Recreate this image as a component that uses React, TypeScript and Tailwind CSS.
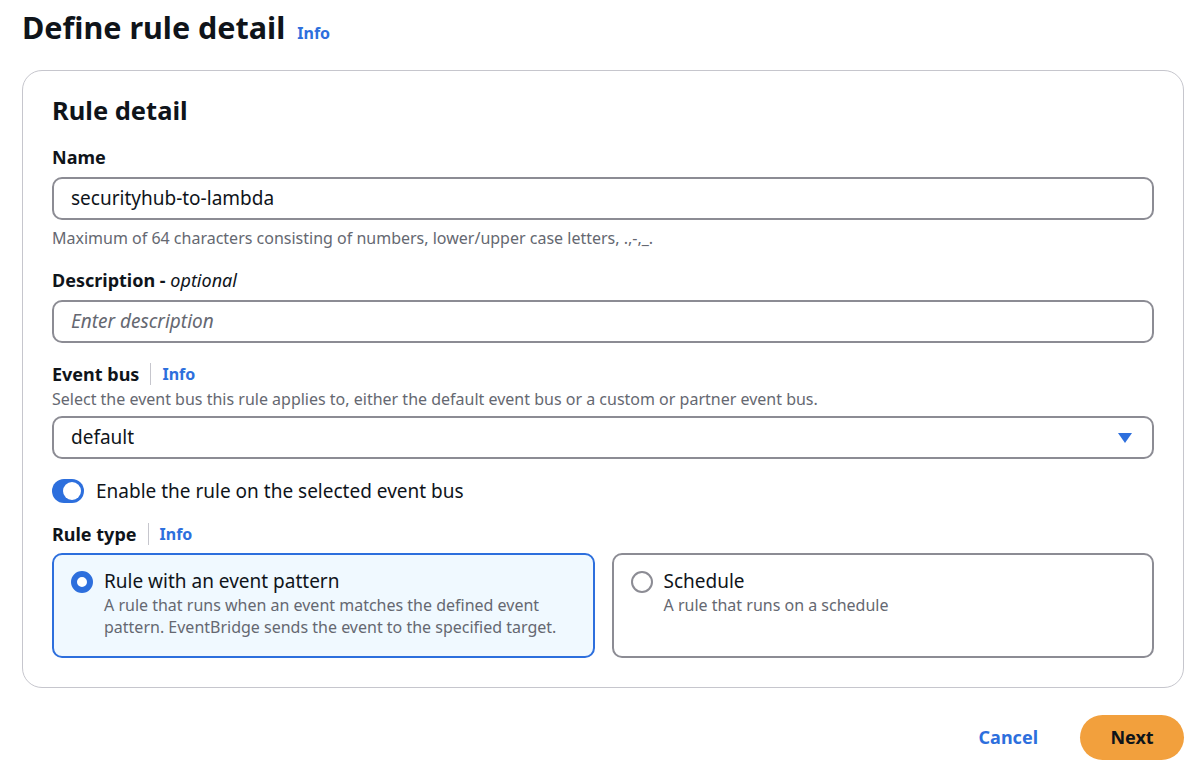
import React from "react";

const FONT = { fontFamily: '"Noto Sans", "Open Sans", Arial, sans-serif' };

function InfoLink({ divider = false }: { divider?: boolean }) {
  return (
    <span className="inline-flex items-center">
      {divider && <span className="mx-[11px] h-[22px] w-px bg-[#c6c6cd]" />}
      <a className="text-[16px] font-bold text-[#2d6fdd]">Info</a>
    </span>
  );
}

function Field({ label, children }: { label: React.ReactNode; children: React.ReactNode }) {
  return (
    <div>
      <div className="text-[18px] font-bold leading-[26px] text-[#0f141a]">{label}</div>
      {children}
    </div>
  );
}

function Tile({ selected, title, desc }: { selected?: boolean; title: string; desc: string }) {
  return (
    <div
      className={
        selected
          ? "flex h-[105px] gap-[11px] rounded-[10px] border-2 border-[#2d6fdd] bg-[#f0f9ff] pl-[17px] pr-[14px] pt-[14px]"
          : "flex h-[105px] gap-[11px] rounded-[10px] border-2 border-[#8c8c94] bg-white pl-[17px] pr-[14px] pt-[14px]"
      }
    >
      <div className="pt-[2px]">
        {selected ? (
          <div className="h-[22px] w-[22px] rounded-full border-[6px] border-[#2d6fdd] bg-white" />
        ) : (
          <div className="h-[22px] w-[22px] rounded-full border-2 border-[#8c8c94] bg-white" />
        )}
      </div>
      <div>
        <div className="text-[19px] leading-[25px] text-[#0f141a]">{title}</div>
        <div className="text-[16px] leading-[22px] text-[#656871]">{desc}</div>
      </div>
    </div>
  );
}

export default function App() {
  return (
    <div className="min-h-[774px] bg-white pl-[22px] pr-[16px] pt-[6px] text-[#0f141a]" style={FONT}>
      <div className="flex items-baseline gap-[12px]">
        <h1 className="text-[30.5px] font-bold leading-[42px]">Define rule detail</h1>
        <InfoLink />
      </div>

      <div className="mt-[22px] rounded-[20px] border border-[#c6c6cd] px-[29px] pb-[29px] pt-[22px]">
        <h2 className="text-[25.5px] font-bold leading-[34px]">Rule detail</h2>

        <div className="mt-[17px] flex flex-col gap-[18px]">
          <Field label="Name">
            <div className="mt-[7px] flex h-[43px] items-center rounded-[10px] border-2 border-[#8c8c94] px-[17px] text-[19px]">
              securityhub-to-lambda
            </div>
            <div className="mt-[7px] text-[16px] leading-[22px] text-[#656871]">
              Maximum of 64 characters consisting of numbers, lower/upper case letters, .,-,_.
            </div>
          </Field>

          <Field
            label={
              <>
                Description - <span className="font-normal italic">optional</span>
              </>
            }
          >
            <div className="mt-[7px] flex h-[43px] items-center rounded-[10px] border-2 border-[#8c8c94] px-[17px] text-[19px] italic text-[#656871]">
              Enter description
            </div>
          </Field>

          <Field
            label={
              <span className="flex items-center">
                Event bus
                <InfoLink divider />
              </span>
            }
          >
            <div className="mt-[1px] text-[16px] leading-[22px] text-[#656871]">
              Select the event bus this rule applies to, either the default event bus or a custom or partner event bus.
            </div>
            <div className="mt-[6px] flex h-[43px] items-center justify-between rounded-[10px] border-2 border-[#8c8c94] pl-[17px] pr-[20px] text-[19px]">
              <span>default</span>
              <svg width="14" height="10" viewBox="0 0 14 10">
                <path d="M0 0 L14 0 L7 10 Z" fill="#2d6fdd" />
              </svg>
            </div>
          </Field>

          <div className="-mb-[3px] flex items-center gap-[12px]">
            <div className="flex h-[24px] w-[32px] items-center justify-end rounded-full bg-[#2d6fdd] px-[3px]">
              <div className="h-[18px] w-[18px] rounded-full bg-white" />
            </div>
            <span className="text-[19px]">Enable the rule on the selected event bus</span>
          </div>

          <Field
            label={
              <span className="flex items-center">
                Rule type
                <InfoLink divider />
              </span>
            }
          >
            <div className="mt-[6px] grid grid-cols-2 gap-[17px]">
              <Tile
                selected
                title="Rule with an event pattern"
                desc="A rule that runs when an event matches the defined event pattern. EventBridge sends the event to the specified target."
              />
              <Tile title="Schedule" desc="A rule that runs on a schedule" />
            </div>
          </Field>
        </div>
      </div>

      <div className="mt-[27px] flex items-center justify-end gap-[42px]">
        <a className="text-[18px] font-bold text-[#2d6fdd]">Cancel</a>
        <button className="h-[45px] w-[104px] rounded-full bg-[#f2a03d] text-[18px] font-bold text-[#0f141a]">
          Next
        </button>
      </div>
    </div>
  );
}
